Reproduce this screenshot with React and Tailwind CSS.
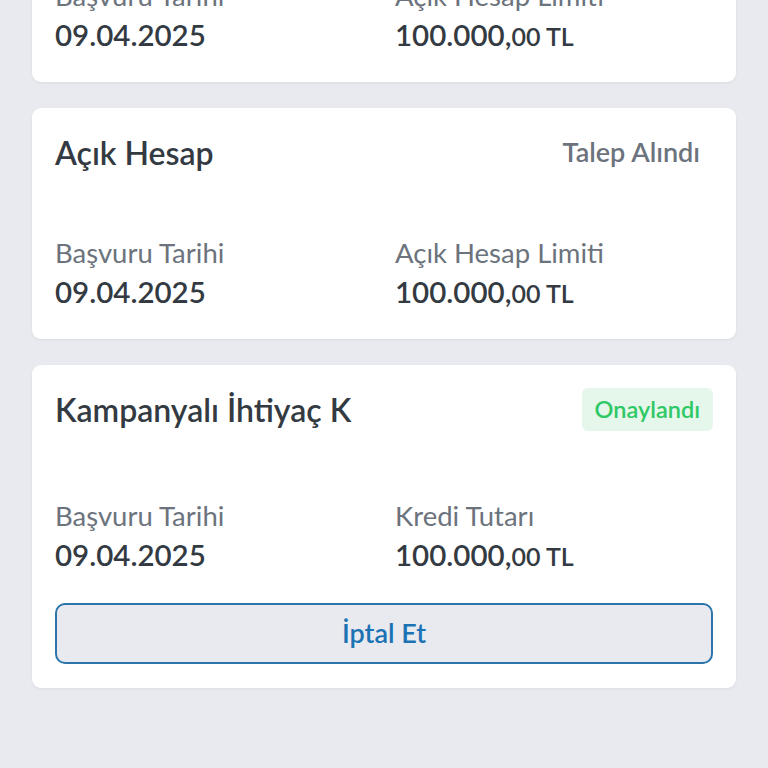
import React from "react";

const font = { fontFamily: "Lato, 'Noto Sans', sans-serif" };

function Amount({ value, small }) {
  return (
    <span>
      {value}
      <span className="text-[25px]">{small}</span>
    </span>
  );
}

function StatusBadge({ status }) {
  if (status === "approved") {
    return (
      <span className="flex h-[43px] items-center rounded-md bg-[#e4f7ea] px-[13px] text-[23.5px] font-semibold text-[#2fc866]">
        Onaylandı
      </span>
    );
  }
  return (
    <span className="flex h-[43px] items-center px-[13px] text-[27px] font-semibold text-[#6c737d]">
      Talep Alındı
    </span>
  );
}

function ApplicationCard({ title, status, rightLabel, detailsGap, cancel }) {
  return (
    <div className="rounded-[9px] bg-white px-[23px] pt-[23px] pb-[28px] shadow-[0_1px_3px_rgba(0,0,0,0.06)] last:pb-[24px]">
      <div className="flex items-center justify-between">
        <h3 className="text-[32px] font-semibold leading-[43px] text-[#343a42]">{title}</h3>
        <StatusBadge status={status} />
      </div>

      <div className={"grid grid-cols-[340px_1fr] " + detailsGap}>
        <div>
          <p className="text-[27.5px] leading-[34px] text-[#6c737d]">Başvuru Tarihi</p>
          <p className="mt-[4px] text-[29.5px] font-semibold leading-[36px] text-[#343a42]">09.04.2025</p>
        </div>
        <div>
          <p className="text-[27.5px] leading-[34px] text-[#6c737d]">{rightLabel}</p>
          <p className="mt-[4px] text-[29.5px] font-semibold leading-[36px] text-[#343a42]">
            <Amount value="100.000," small="00 TL" />
          </p>
        </div>
      </div>

      {cancel && (
        <button className="mt-[29px] flex h-[61px] w-full items-center justify-center rounded-[10px] border-2 border-[#2b75ab] bg-[#e9eaef] text-[27px] font-semibold text-[#1b73b4]">
          İptal Et
        </button>
      )}
    </div>
  );
}

export default function App() {
  return (
    <div className="min-h-[768px] overflow-hidden bg-[#e9eaef]" style={font}>
      <div className="mt-[-149px] flex flex-col gap-[26px] px-[32px] pb-[80px]">
        <ApplicationCard
          title="Açık Hesap"
          status="pending"
          rightLabel="Açık Hesap Limiti"
          detailsGap="mt-[62px]"
        />
        <ApplicationCard
          title="Açık Hesap"
          status="pending"
          rightLabel="Açık Hesap Limiti"
          detailsGap="mt-[62px]"
        />
        <ApplicationCard
          title="Kampanyalı İhtiyaç K"
          status="approved"
          rightLabel="Kredi Tutarı"
          detailsGap="mt-[68px]"
          cancel
        />
      </div>
    </div>
  );
}
